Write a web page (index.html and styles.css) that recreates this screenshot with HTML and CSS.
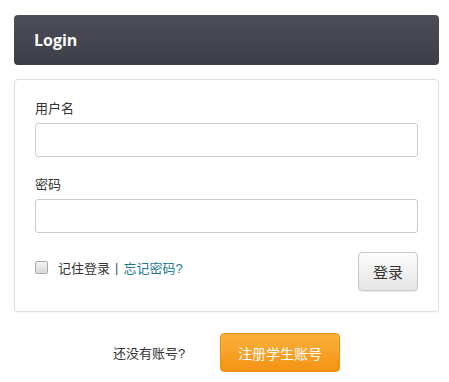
FILE: index.html
```html
<!DOCTYPE html>
<html lang="zh-CN">
<head>
    <meta charset="UTF-8">
    <title>Login</title>
    <link rel="stylesheet" href="styles.css">
</head>
<body>
    <div class="wrap">
        <div class="head">Login</div>

        <form class="panel" onsubmit="return false;">
            <label class="lbl" for="user">用户名</label>
            <input class="field" type="text" id="user">

            <label class="lbl" for="pwd">密码</label>
            <input class="field" type="password" id="pwd">

            <div class="row">
                <div class="remember">
                    <span class="box"></span>
                    <span>记住登录</span>
                    <span class="sep">|</span>
                    <a href="#" class="forgot">忘记密码?</a>
                </div>
                <button class="btn-login">登录</button>
            </div>
        </form>

        <div class="signup">
            <span>还没有账号?</span>
            <button class="btn-reg">注册学生账号</button>
        </div>
    </div>
</body>
</html>
```

FILE: styles.css
```css
body {
    margin: 0;
    padding: 15px 10px 0 14px;
    font-family: "Liberation Sans", "Noto Sans CJK SC", sans-serif;
    font-size: 13px;
    color: #333;
    background: #fff;
}
.head {
    height: 50px;
    line-height: 50px;
    padding-left: 20px;
    color: #fff;
    font-family: "Open Sans", "Liberation Sans", sans-serif;
    font-weight: bold;
    font-size: 16px;
    border-radius: 4px;
    background: linear-gradient(#4b4e58, #3c3e47);
}
.panel {
    margin-top: 14px;
    border: 1px solid #ddd;
    border-radius: 4px;
    padding: 19px 20px 20px 20px;
    display: flex;
    flex-direction: column;
    box-shadow: 0 1px 2px rgba(0,0,0,0.04);
}
.lbl {
    line-height: 20px;
    margin-bottom: 4px;
}
.field {
    height: 34px;
    box-sizing: border-box;
    border: 1px solid #ccc;
    border-radius: 3px;
    margin: 0 0 18px 0;
    padding: 4px 8px;
    font-size: 14px;
}
.row {
    display: flex;
    justify-content: space-between;
    align-items: flex-start;
    margin-top: 1px;
}
.remember {
    display: flex;
    align-items: center;
    gap: 5px;
    margin-top: 6px;
}
.box {
    width: 11px;
    height: 11px;
    border: 1px solid #aaa;
    border-radius: 2px;
    background: linear-gradient(#f4f4f4, #d8d8d8);
    margin-right: 5px;
}
.sep {
    color: #555;
}
.forgot {
    color: #1b7a96;
    text-decoration: none;
}
.btn-login {
    width: 60px;
    height: 39px;
    border: 1px solid #c8c8c8;
    border-radius: 4px;
    background: linear-gradient(#fdfdfd, #e4e4e4);
    font-family: inherit;
    font-size: 15px;
    color: #333;
    box-shadow: 0 1px 1px rgba(0,0,0,0.08);
}
.signup {
    margin-top: 21px;
    display: flex;
    align-items: center;
    justify-content: center;
    gap: 35px;
}
.btn-reg {
    width: 120px;
    height: 39px;
    border: 1px solid #e8900f;
    border-radius: 4px;
    background: linear-gradient(#fbb03b, #f39313);
    color: #fff;
    font-family: inherit;
    font-size: 14px;
}
```
